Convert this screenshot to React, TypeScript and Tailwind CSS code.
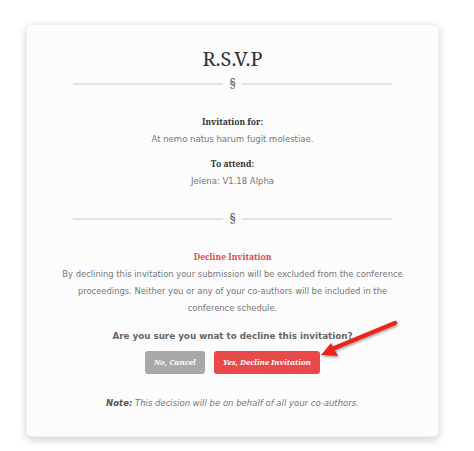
import React from "react";

function Divider() {
  return (
    <div className="flex items-center w-[319px] mx-auto gap-[6px]">
      <div className="flex-1 h-[2px] bg-[#e3e3e3]" />
      <span className="text-[12px] leading-none text-[#555] font-['Noto_Serif','DejaVu_Serif',serif]">§</span>
      <div className="flex-1 h-[2px] bg-[#e3e3e3]" />
    </div>
  );
}

export default function App() {
  return (
    <div className="w-[474px] h-[451px] bg-white relative pt-[24px] pl-[26px]">
      <div className="w-[413px] h-[413px] bg-[#fcfcfc] rounded-[5px] border border-[#eeeeee] shadow-[0_3px_8px_rgba(0,0,0,0.18)] flex flex-col items-center">
        <h1 className="mt-[22px] text-[20px] leading-[24px] text-[#333] font-['Noto_Serif','DejaVu_Serif',serif]">R.S.V.P</h1>
        <div className="mt-[7px] w-full"><Divider /></div>
        <div className="mt-[26px] text-[8.5px] font-bold text-[#333] leading-[12px] font-['Noto_Serif','DejaVu_Serif',serif]">Invitation for:</div>
        <div className="mt-[5px] text-[8.5px] text-[#777] leading-[12px] font-['DejaVu_Sans',sans-serif]">At nemo natus harum fugit molestiae.</div>
        <div className="mt-[13px] text-[8.5px] font-bold text-[#333] leading-[12px] font-['Noto_Serif','DejaVu_Serif',serif]">To attend:</div>
        <div className="mt-[5px] text-[8.5px] text-[#777] leading-[12px] font-['DejaVu_Sans',sans-serif]">Jelena: V1.18 Alpha</div>
        <div className="mt-[26px] w-full"><Divider /></div>
        <div className="mt-[26px] text-[8.5px] font-bold text-[#e04848] leading-[12px] font-['Noto_Serif','DejaVu_Serif',serif]">Decline Invitation</div>
        <p className="mt-[3px] w-[348px] text-center text-[8.4px] leading-[17px] text-[#777] font-['DejaVu_Sans',sans-serif]">
          By declining this invitation your submission will be excluded from the conference proceedings. Neither you or any of your co-authors will be included in the conference schedule.
        </p>
        <div className="mt-[13px] text-[8.75px] font-bold text-[#666] leading-[12px] font-['DejaVu_Sans',sans-serif]">Are you sure you wnat to decline this invitation?</div>
        <div className="mt-[9px] flex gap-[9px]">
          <button className="h-[23px] px-[9px] rounded-[3px] bg-[#a8a8a8] text-white text-[7.75px] font-bold italic font-['Noto_Serif','DejaVu_Serif',serif]">No, Cancel</button>
          <button className="h-[23px] px-[9px] rounded-[3px] bg-[#e84a4a] text-white text-[7.75px] font-bold italic font-['Noto_Serif','DejaVu_Serif',serif]">Yes, Decline Invitation</button>
        </div>
        <div className="mt-[23px] text-[8.5px] italic text-[#777] leading-[12px] font-['DejaVu_Sans',sans-serif]">
          <span className="font-bold text-[#555]">Note:</span> This decision will be on behalf of all your co-authors.
        </div>
      </div>
      <svg className="absolute left-0 top-0 pointer-events-none" width="474" height="451" viewBox="0 0 474 451">
        <defs>
          <filter id="sh" x="-20%" y="-20%" width="140%" height="140%">
            <feDropShadow dx="1" dy="1.5" stdDeviation="1" floodColor="#000" floodOpacity="0.35" />
          </filter>
        </defs>
        <g filter="url(#sh)">
          <line x1="395" y1="323" x2="332" y2="349" stroke="#e8281c" strokeWidth="4.5" strokeLinecap="round" />
          <polygon points="321,355 331,343 338,356" fill="#e8281c" />
        </g>
      </svg>
    </div>
  );
}
